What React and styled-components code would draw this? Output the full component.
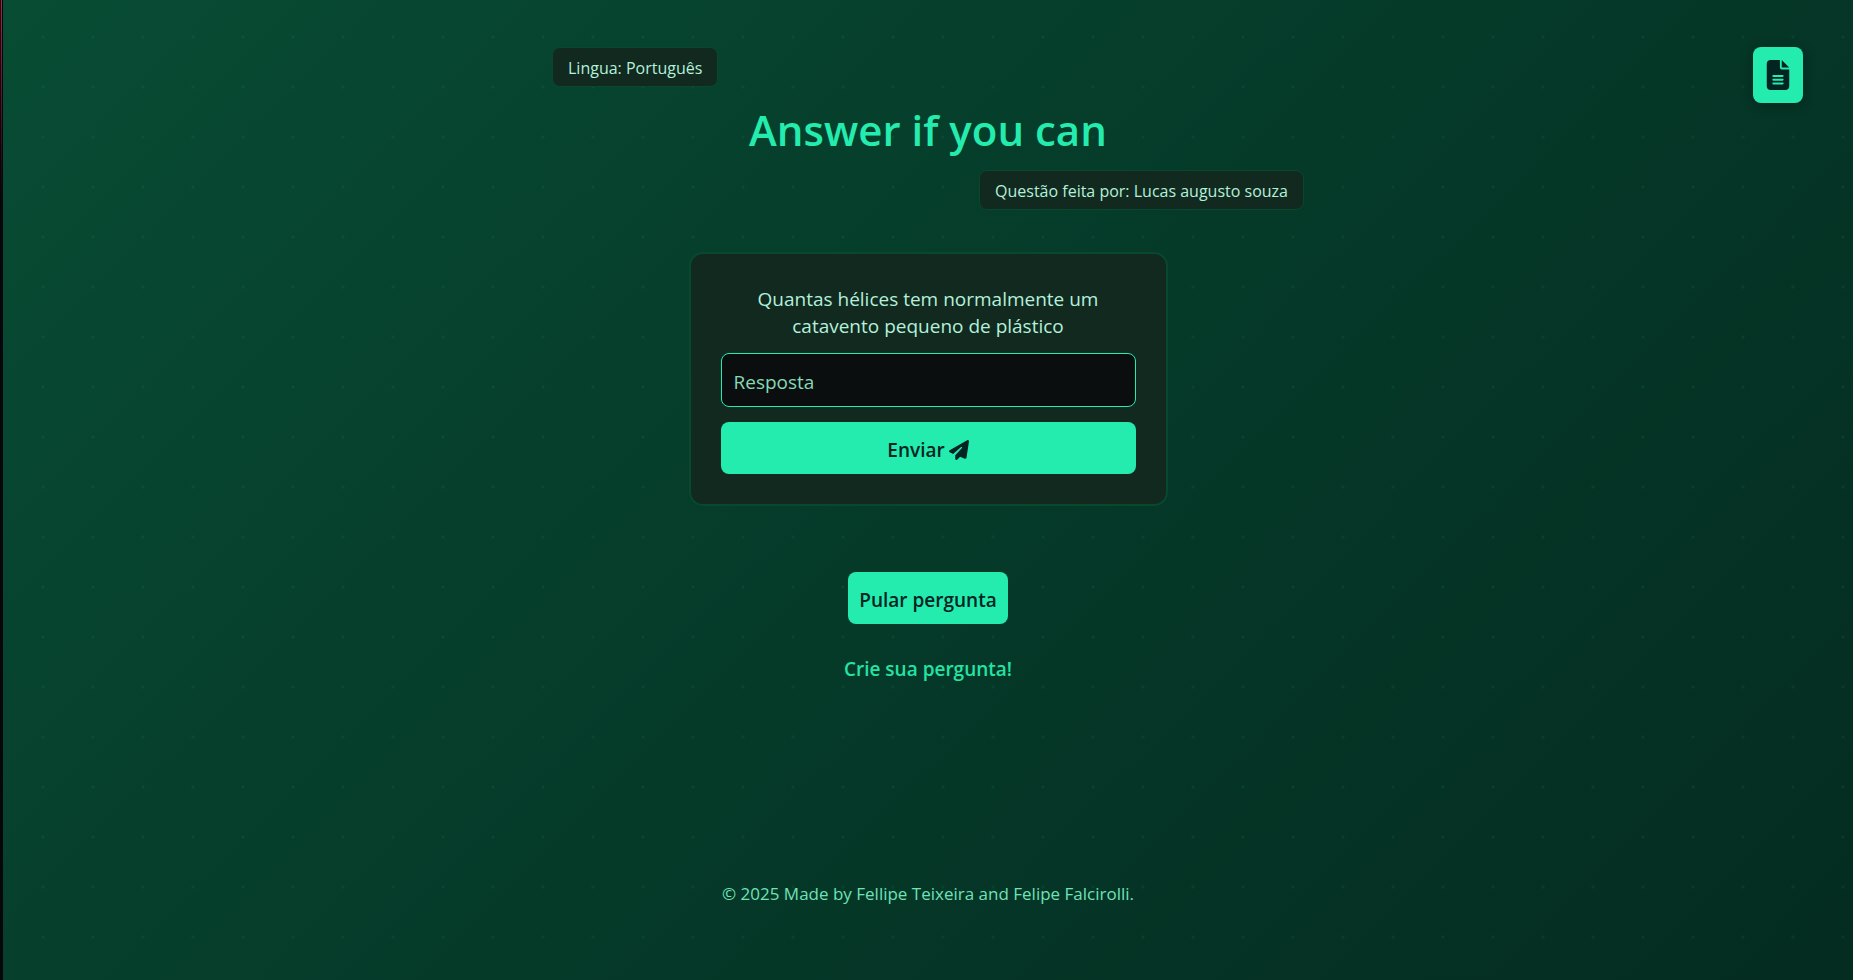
import React from "react";
import styled, { createGlobalStyle } from "styled-components";
import { FaFileLines, FaPaperPlane } from "react-icons/fa6";

const GlobalStyle = createGlobalStyle`
  *, *::before, *::after { box-sizing: border-box; }
  html { background: #06060b; }
  body {
    margin: 0;
    font-family: "Open Sans", "Noto Sans", sans-serif;
    color: #b4f0da;
  }
`;

const Frame = styled.div`
  display: flex;
  min-height: 100vh;
`;

const Rail = styled.div`
  width: 3px;
  flex-shrink: 0;
  background: linear-gradient(#c2184f, #06060b 200px) 1px 0 / 1px 100% no-repeat #06060b;
`;

const Page = styled.div`
  flex: 1;
  display: grid;
  grid-template-columns: 1fr minmax(0, 752px) 1fr;
  align-items: start;
  padding: 47px 50px 73px;
  background:
    radial-gradient(circle, rgba(16, 185, 120, 0.1) 1px, transparent 2px) 15px 12px / 50px 50px,
    linear-gradient(135deg, #084c34 0%, #053a29 50%, #042c20 100%);
`;

const Main = styled.main`
  grid-column: 2;
  display: flex;
  flex-direction: column;
  align-items: center;
  min-height: 860px;
`;

const Tag = styled.p`
  margin: 0;
  padding: 2px 15px 0;
  border: 1px solid #07482f;
  border-radius: 8px;
  background: #11291f;
  font-size: 16px;
  line-height: 36px;
  align-self: ${(p) => p.$side};
`;

const Title = styled.h1`
  margin: 14px 0 11px;
  color: #24ecae;
  font-size: 42px;
  font-weight: 600;
  line-height: 58px;
`;

const Card = styled.form`
  display: flex;
  flex-direction: column;
  width: 479px;
  max-width: 100%;
  margin: 42px 0 66px;
  padding: 32px 30px 30px;
  border: 2px solid #07482f;
  border-radius: 14px;
  background: #11291f;
`;

const Question = styled.label`
  margin-bottom: 13px;
  padding: 0 20px;
  font-size: 19px;
  line-height: 27px;
  text-align: center;
`;

const Answer = styled.input`
  height: 54px;
  margin-bottom: 15px;
  padding: 4px 12px 0;
  border: 1px solid #24ecae;
  border-radius: 8px;
  background: #0a0e0f;
  color: #b4f0da;
  font: 400 19px "Open Sans", "Noto Sans", sans-serif;
  &::placeholder { color: #86d9b8; opacity: 1; }
`;

const Button = styled.button`
  display: flex;
  align-items: center;
  justify-content: center;
  gap: 4px;
  height: 52px;
  padding: 3px 11px 0;
  border: 0;
  border-radius: 8px;
  background: #24ecae;
  color: #022422;
  font: 600 19px "Open Sans", "Noto Sans", sans-serif;
  cursor: pointer;
`;

const CreateLink = styled.a`
  margin-top: 32px;
  color: #24e3a4;
  font-size: 19px;
  font-weight: 600;
  line-height: 27px;
  text-decoration: none;
`;

const Footer = styled.footer`
  margin-top: auto;
  color: #6ee2b8;
  font-size: 17px;
  line-height: 26px;
`;

const DocsButton = styled.button`
  grid-column: 3;
  justify-self: end;
  display: grid;
  place-items: center;
  width: 50px;
  height: 56px;
  padding: 0;
  border: 0;
  border-radius: 8px;
  background: #24ecae;
  color: #022422;
  box-shadow: 0 2px 12px rgba(0, 0, 0, 0.3);
  cursor: pointer;
`;

export default function App() {
  return (
    <>
      <GlobalStyle />
      <Frame>
        <Rail />
        <Page>
          <Main>
            <Tag $side="flex-start">Lingua: Português</Tag>
            <Title>Answer if you can</Title>
            <Tag $side="flex-end">Questão feita por: Lucas augusto souza</Tag>
            <Card onSubmit={(e) => e.preventDefault()}>
              <Question htmlFor="answer">
                Quantas hélices tem normalmente um catavento pequeno de plástico
              </Question>
              <Answer id="answer" placeholder="Resposta" />
              <Button type="submit">
                Enviar <FaPaperPlane size={20} aria-hidden="true" />
              </Button>
            </Card>
            <Button type="button">Pular pergunta</Button>
            <CreateLink href="#criar">Crie sua pergunta!</CreateLink>
            <Footer>© 2025 Made by Fellipe Teixeira and Felipe Falcirolli.</Footer>
          </Main>
          <DocsButton type="button" aria-label="Documento">
            <FaFileLines size={30} aria-hidden="true" />
          </DocsButton>
        </Page>
      </Frame>
    </>
  );
}
